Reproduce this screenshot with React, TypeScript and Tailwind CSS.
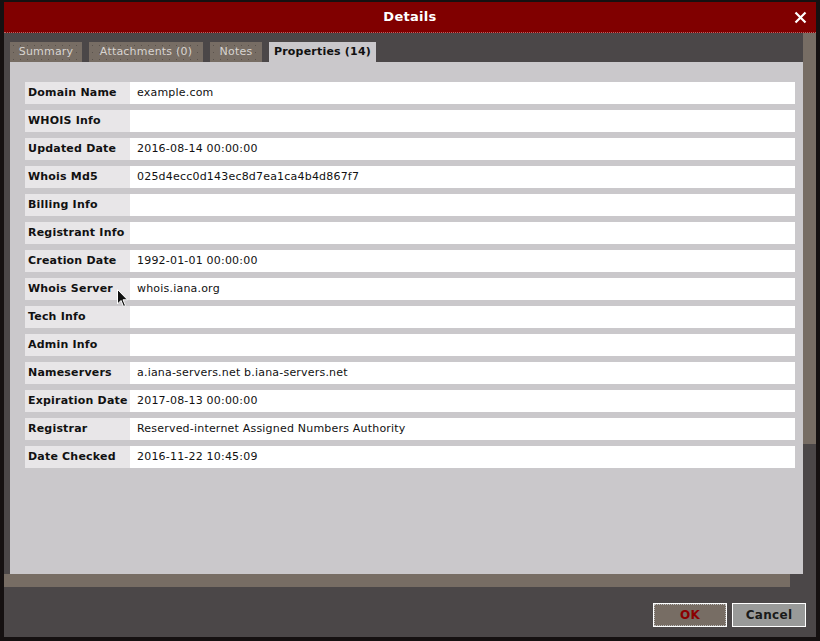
import React from 'react';

const rows: [string, string][] = [
  ['Domain Name', 'example.com'],
  ['WHOIS Info', ''],
  ['Updated Date', '2016-08-14 00:00:00'],
  ['Whois Md5', '025d4ecc0d143ec8d7ea1ca4b4d867f7'],
  ['Billing Info', ''],
  ['Registrant Info', ''],
  ['Creation Date', '1992-01-01 00:00:00'],
  ['Whois Server', 'whois.iana.org'],
  ['Tech Info', ''],
  ['Admin Info', ''],
  ['Nameservers', 'a.iana-servers.net b.iana-servers.net'],
  ['Expiration Date', '2017-08-13 00:00:00'],
  ['Registrar', 'Reserved-internet Assigned Numbers Authority'],
  ['Date Checked', '2016-11-22 10:45:09'],
];

const tabs = [
  { label: 'Summary', w: 'w-[72px]' },
  { label: 'Attachments (0)', w: 'w-[114px]' },
  { label: 'Notes', w: 'w-[52px]' },
];

const App: React.FC = () => {
  return (
    <div className="w-[820px] h-[641px] bg-[#151111] p-[2px_4px_4px_4px] font-['DejaVu_Sans',sans-serif] relative overflow-hidden">
      <div className="h-full flex flex-col bg-[#4b4748]">
        {/* title bar */}
        <div className="h-[31px] bg-[#800000] border-b border-dotted border-[#c06060] flex items-center justify-center relative shrink-0">
          <span className="text-white text-[13px] font-bold tracking-[0.3px]">Details</span>
          <svg className="absolute right-[9px] top-[9px]" width="13" height="13" viewBox="0 0 13 13">
            <path d="M1.5 1.5 L11.5 11.5 M11.5 1.5 L1.5 11.5" stroke="white" strokeWidth="2.2" />
          </svg>
        </div>

        <div className="flex flex-1 min-h-0">
          <div className="flex flex-col w-[799px]">
            <div className="flex flex-1 min-h-0">
              <div className="w-[6px]" />
              <div className="flex flex-col flex-1">
                {/* tabs */}
                <div className="flex items-end gap-[7px] h-[29px]">
                  {tabs.map((t) => (
                    <div
                      key={t.label}
                      className={`${t.w} h-[20px] pt-px bg-[#776d64] text-[#d8d4d0] text-[11px] tracking-[0.2px] flex items-center justify-center`}
                      style={{ backgroundImage: 'radial-gradient(#5a524c 0.6px, transparent 0.8px)', backgroundSize: '7px 7px' }}
                    >
                      {t.label}
                    </div>
                  ))}
                  <div className="w-[107px] h-[20px] pt-px bg-[#cac8cb] text-[#111] font-bold text-[11px] tracking-[0.2px] flex items-center justify-center">
                    Properties (14)
                  </div>
                </div>

                {/* content */}
                <div className="flex-1 bg-[#cac8cb] pt-[20px] pl-[15px] pr-[8px] flex flex-col gap-[6px]">
                  {rows.map(([k, v]) => (
                    <div key={k} className="flex h-[22px] text-[11px] tracking-[0.2px]">
                      <div className="w-[105px] pt-px bg-[#e8e6e8] font-bold text-[#111] flex items-center pl-[3px]">{k}</div>
                      <div className="flex-1 pt-px bg-white text-[#111] flex items-center pl-[7px]">{v}</div>
                    </div>
                  ))}
                </div>
              </div>
            </div>
            {/* horizontal scrollbar */}
            <div className="h-[13px] flex shrink-0">
              <div className="w-[786px] bg-[#776d64]" />
            </div>
          </div>
          {/* vertical scrollbar */}
          <div className="w-[13px] flex flex-col">
            <div className="h-[411px] bg-[#776d64]" />
          </div>
        </div>

        {/* footer */}
        <div className="h-[50px] flex items-start justify-end gap-[5px] pr-[10px] pt-[16px] shrink-0">
          <button className="w-[74px] h-[24px] bg-[#776d64] border border-white text-[#8b0000] font-bold text-[12px] tracking-wide outline outline-1 outline-dotted outline-[#bbb] -outline-offset-2">
            OK
          </button>
          <button className="w-[74px] h-[24px] bg-[#999a99] border border-white text-[#1a1a1a] font-bold text-[12px] tracking-wide">
            Cancel
          </button>
        </div>
      </div>

      {/* mouse cursor */}
      <svg className="absolute left-[117px] top-[289px]" width="12" height="19" viewBox="0 0 12 19">
        <path d="M0.5 0.5 L0.5 15 L4 11.5 L6.5 17.5 L8.5 16.5 L6 10.8 L10.5 10.8 Z" fill="#111" stroke="white" strokeWidth="1" />
      </svg>
    </div>
  );
};

export default App;
